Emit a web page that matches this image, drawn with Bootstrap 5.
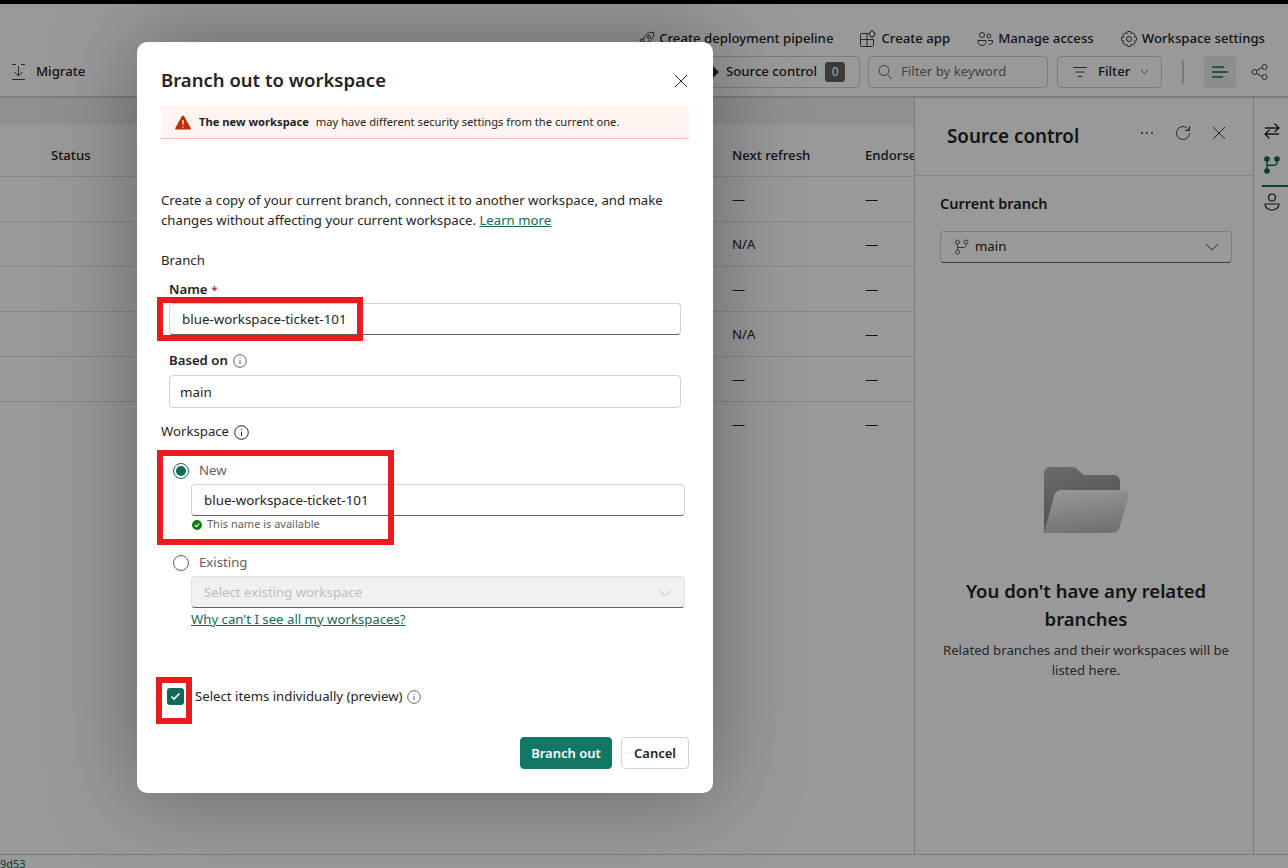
<!DOCTYPE html>
<html lang="en">
<head>
  <meta charset="UTF-8" />
  <meta name="viewport" content="width=device-width, initial-scale=1" />
  <title>Branch out to workspace</title>
  <link href="https://cdn.jsdelivr.net/npm/bootstrap@5.3.2/dist/css/bootstrap.min.css" rel="stylesheet" />
  <style>
    html, body { height: 100%; overflow: hidden; }
    body { font-family: "Noto Sans", "Open Sans", sans-serif; font-size: 13.2px; color: #242424; background: #fff; }
    svg { flex: none; display: block; }
    .app-shell { height: 868px; border-top: 4px solid #000; }
    .top-area { height: 94px; border-bottom: 2px solid #d1d1d1; }
    .action-row { height: 52px; padding: 17px 23px 0 0; gap: 26px; }
    .action-row span, .tool-row { font-weight: 500; }
    .tool-row { height: 32px; }
    .migrate { padding-left: 11px; gap: 10px; }
    .tool-box { height: 32px; border: 1px solid #d1d1d1; border-radius: 4px; }
    .source-box { width: 160px; padding-left: 2px; margin-right: 8px; gap: 8px; }
    .source-box .diamond-mark { margin-right: -1px; }
    .zero-pill { width: 20px; height: 20px; border-radius: 3px; background: #616161; color: #fff; font-size: 12px; }
    .keyword-box { width: 180px; padding-left: 8px; gap: 8px; color: #707070; font-weight: 400; margin-right: 9px; }
    .filter-box { width: 105px; padding-left: 14px; gap: 10px; }
    .tool-sep { width: 2px; height: 24px; background: #d1d1d1; margin: 0 20px; }
    .list-btn { width: 32px; height: 32px; background: #ebebeb; border-radius: 4px; margin-right: 15px; }
    .tool-end { margin-right: 19px; }
    .main-area { width: 915px; border-right: 1px solid #d1d1d1; overflow: hidden; }
    .grey-strip { height: 27px; background: #f0f0f0; }
    .item-table { table-layout: fixed; width: 914px; margin: 0; }
    .item-table th, .item-table td { padding: 3px 12px 0; height: 45px; vertical-align: middle; border-color: #e0e0e0; color: #242424; white-space: nowrap; font-size: 13.2px; }
    .item-table th { height: 51px; padding-top: 11px; font-weight: 500; }
    .item-table tbody tr:last-child td { border-bottom: 0; }
    .cw-a { width: 39px; }
    .cw-c { width: 133px; }
    .cw-d { width: 61px; }
    .side-panel { width: 339px; border-right: 1px solid #d1d1d1; }
    .panel-head { height: 78px; padding: 0 27px 7px 32px; border-bottom: 1px solid #e0e0e0; }
    .panel-title { font-size: 18.8px; font-weight: 600; margin-top: 6px; }
    .head-dots { margin-right: 20px; }
    .head-refresh { margin-right: 20px; }
    .panel-body { padding: 17px 21px 0 25px; }
    .panel-label { font-size: 14.5px; font-weight: 600; margin-bottom: 16px; }
    .branch-select { height: 32px; padding: 0 12px 0 13px; gap: 5px; border: 1px solid #d1d1d1; border-bottom-color: #616161; border-radius: 4px; }
    .empty-block { padding-top: 204px; text-align: center; }
    .empty-title { font-size: 18.5px; font-weight: 600; line-height: 28px; margin: 44px 0 7px; }
    .empty-text { line-height: 20px; color: #424242; }
    .rail { width: 34px; padding-top: 16px; }
    .rail-slot { height: 34px; padding-left: 2px; }
    .rail-on { height: 39px; margin-left: 8px; padding: 0 6px 4px 0; border-bottom: 2px solid #0f6b58; }
    .rail-last { height: 30px; }
    .foot-line { height: 14px; border-top: 1px solid #d1d1d1; font-size: 11px; line-height: 17px; color: #0f6b58; overflow: hidden; }
    .dim-layer { position: absolute; inset: 4px 0 0 0; background: rgba(0,0,0,.4); }
    .branch-dialog { position: absolute; left: 137px; top: 42px; width: 576px; height: 751px; padding: 0 24px; background: #fff; border-radius: 10px; box-shadow: 0 0 90px rgba(0,0,0,.35); }
    .dlg-head { height: 64px; padding-top: 13px; }
    .dlg-title { font-size: 18.5px; font-weight: 600; margin: 0; }
    .dlg-close { margin-right: 1px; }
    .warn-bar { height: 33px; padding-left: 14px; gap: 8px; background: #fff4f0; border-bottom: 1px solid #f4bfab; font-size: 11.2px; }
    .warn-bar b { font-weight: 700; margin-right: 4px; }
    .dlg-intro { margin: 51px 0 20px; line-height: 20px; }
    .dlg-link { color: #0f6b58; }
    .field-wrap { padding-left: 8px; padding-right: 8px; }
    .sub-label { display: flex; align-items: center; gap: 5px; font-weight: 600; height: 20px; margin-bottom: 6px; }
    .name-label { padding-top: 6px; }
    .label-gap { margin-top: 14px; padding-top: 4px; }
    .req-mark { color: #c50f1f; font-size: 11px; margin-left: -1px; }
    .fab-input { height: 32px; padding: 0 12px; border: 1px solid #d1d1d1; border-bottom-color: #616161; border-radius: 4px; display: flex; align-items: center; color: #242424; font-size: 13.35px; }
    .input-plain { border-bottom-color: #d1d1d1; height: 33px; padding: 2px 0 0 10px; }
    .group-label { display: flex; align-items: center; gap: 5px; height: 20px; padding-top: 2px; }
    .branch-head { margin-bottom: 7px; }
    .space-head { margin-top: 13px; }
    .radio-row { display: flex; align-items: center; gap: 10px; height: 24px; margin-top: 18px; padding-left: 12px; color: #616161; }
    .radio-dot { width: 16px; height: 16px; border-radius: 50%; border: 1px solid #616161; }
    .radio-on { border-color: #0f6b58; padding: 2px; }
    .radio-on i { display: block; width: 10px; height: 10px; border-radius: 50%; background: #0f6b58; }
    .indent-block { margin: 1px 0 0 30px; width: 494px; }
    .ok-note { display: flex; align-items: center; gap: 5px; padding-left: 1px; font-size: 11px; color: #616161; height: 17px; }
    .select-off { padding-top: 2px; background: #f0f0f0; color: #bdbdbd; justify-content: space-between; border-color: #e0e0e0; border-bottom-color: #616161; font-size: 13.2px; }
    .why-link { display: block; margin-top: 2px; }
    .check-row { display: flex; align-items: center; height: 20px; margin: 57px 0 0 6px; gap: 11px; }
    .check-box { width: 17px; height: 17px; border-radius: 3px; background: #0f6b58; display: flex; align-items: center; justify-content: center; }
    .dlg-foot { gap: 9px; margin-top: 30px; }
    .btn-teal, .btn-teal:hover { width: 92px; background: #117865; border-color: #117865; color: #fff; }
    .btn-line, .btn-line:hover { width: 68px; background: #fff; border-color: #d1d1d1; color: #242424; }
    .btn-teal, .btn-line { font-weight: 600; font-size: 13px; height: 32px; padding: 2px 0 0; border-radius: 4px; }
    .callout { position: absolute; border: 6px solid #e81c1c; }
    .callout-a { left: 157px; top: 297px; width: 206px; height: 44px; }
    .callout-b { left: 157px; top: 450px; width: 237px; height: 95px; }
    .callout-c { left: 156px; top: 677px; width: 36px; height: 47px; }
  </style>
</head>
<body class="position-relative">

  <div class="app-shell d-flex flex-column">
    <div class="top-area">
      <div class="action-row d-flex justify-content-end">
        <div class="d-flex align-items-center gap-1">
          <svg width="16" height="16" viewBox="0 0 16 16" fill="none" stroke="#424242"><path d="M14.500 1.500c-4-.5-7 1-9 4.500l-1.500 3 3 3 3-1.500c3.500-2 5-5 4.500-9z"/><circle cx="10" cy="6" r="1.500"/><path d="M4 8H2l-1 2 2.500.500M8 12v2l2 1 .500-2.500M3.500 12.500 1.500 14.500"/></svg>
          <span>Create deployment pipeline</span>
        </div>
        <div class="d-flex align-items-center gap-1">
          <svg width="18" height="18" viewBox="0 0 18 18" fill="none" stroke="#424242"><path d="M9 3.500H2.500a1 1 0 0 0-1 1v11a1 1 0 0 0 1 1h11a1 1 0 0 0 1-1V9M1.500 9.500h13M8 3.500v13"/><rect x="10.500" y="1.500" width="5" height="5" rx="1" transform="rotate(45 13 4)"/></svg>
          <span>Create app</span>
        </div>
        <div class="d-flex align-items-center gap-1">
          <svg width="18" height="16" viewBox="0 0 18 16" fill="none" stroke="#424242"><circle cx="6" cy="4" r="2.500"/><circle cx="13" cy="5" r="2"/><path d="M2 9.500h8v1.500c0 2-2 3.500-4 3.500s-4-1.500-4-3.500zM12 9.500h4.500V11c0 1.500-1.500 2.500-3.500 2.500"/></svg>
          <span>Manage access</span>
        </div>
        <div class="d-flex align-items-center gap-1">
          <svg width="18" height="18" viewBox="0 0 18 18" fill="none" stroke="#424242"><circle cx="9" cy="9" r="2.500"/><path d="M7.500 1.500h3l.6 2.200 2-.9 2 2-.9 2.100 2.300.6v3l-2.300.6.900 2.100-2 2-2-.9-.6 2.200h-3l-.6-2.200-2 .9-2-2 .9-2.100-2.300-.6v-3l2.300-.6-.9-2.100 2-2 2 .9z"/></svg>
          <span>Workspace settings</span>
        </div>
      </div>
      <div class="tool-row d-flex align-items-center">
        <div class="migrate d-flex align-items-center me-auto">
          <svg width="15" height="18" viewBox="0 0 15 18" fill="none" stroke="#424242"><path d="M1 1.500h4M10 1.500h4M1 16.500h13M7.500 3v10M3.500 9l4 4 4-4"/></svg>
          <span>Migrate</span>
        </div>
        <div class="tool-box source-box d-flex align-items-center">
          <svg class="diamond-mark" width="16" height="16" viewBox="0 0 16 16" fill="#303030"><path d="M8 0 16 8 8 16 0 8z"/></svg>
          <span>Source control</span>
          <span class="zero-pill d-flex align-items-center justify-content-center">0</span>
        </div>
        <div class="tool-box keyword-box d-flex align-items-center">
          <svg width="16" height="16" viewBox="0 0 16 16" fill="none" stroke="#616161"><circle cx="7" cy="6.500" r="5"/><path d="m10.500 10.500 4 4.500"/></svg>
          <span>Filter by keyword</span>
        </div>
        <div class="tool-box filter-box d-flex align-items-center">
          <svg width="16" height="12" viewBox="0 0 16 12" fill="none" stroke="#424242"><path d="M1 1.500h14M3.500 6h9M6 10.500h4"/></svg>
          <span>Filter</span>
          <svg width="9" height="6" viewBox="0 0 9 6" fill="none" stroke="#616161"><path d="m1 1 3.500 3.500L8 1"/></svg>
        </div>
        <div class="tool-sep"></div>
        <div class="list-btn d-flex align-items-center justify-content-center">
          <svg width="16" height="14" viewBox="0 0 16 14" fill="none" stroke="#0f6b58" stroke-width="1.500"><path d="M0 2h12M0 7h16M0 12h11"/></svg>
        </div>
        <svg class="tool-end" width="18" height="18" viewBox="0 0 18 18" fill="none" stroke="#424242"><circle cx="3.500" cy="9" r="2.500"/><circle cx="13.500" cy="4" r="2.500"/><circle cx="13.500" cy="14" r="2.500"/><path d="M5.500 7.500 11 4.500M5.500 10.500l5.500 3"/></svg>
      </div>
    </div>

    <div class="flex-grow-1 d-flex overflow-hidden">
      <div class="main-area">
        <div class="grey-strip"></div>
        <table class="table item-table">
          <colgroup><col class="cw-a" /><col /><col class="cw-c" /><col class="cw-d" /></colgroup>
          <thead><tr><th></th><th>Status</th><th>Next refresh</th><th>Endorsement</th></tr></thead>
          <tbody>
            <tr><td></td><td></td><td>—</td><td>—</td></tr>
            <tr><td></td><td></td><td>N/A</td><td>—</td></tr>
            <tr><td></td><td></td><td>—</td><td>—</td></tr>
            <tr><td></td><td></td><td>N/A</td><td>—</td></tr>
            <tr><td></td><td></td><td>—</td><td>—</td></tr>
            <tr><td></td><td></td><td>—</td><td>—</td></tr>
          </tbody>
        </table>
      </div>

      <div class="side-panel">
        <div class="panel-head d-flex align-items-center">
          <div class="panel-title me-auto">Source control</div>
          <svg class="head-dots" width="14" height="4" viewBox="0 0 14 4" fill="#424242"><circle cx="2" cy="2" r="1"/><circle cx="7" cy="2" r="1"/><circle cx="12" cy="2" r="1"/></svg>
          <svg class="head-refresh" width="18" height="18" viewBox="0 0 18 18" fill="none" stroke="#424242"><path d="M15.500 9a6.500 6.500 0 1 1-2-4.700L15.500 6.500M15.500 2v4.500H11"/></svg>
          <svg width="14" height="14" viewBox="0 0 14 14" fill="none" stroke="#424242"><path d="m1 1 12 12M13 1 1 13"/></svg>
        </div>
        <div class="panel-body">
          <div class="panel-label">Current branch</div>
          <div class="branch-select d-flex align-items-center">
            <svg width="16" height="16" viewBox="0 0 16 16" fill="none" stroke="#616161"><circle cx="3.500" cy="3" r="2"/><circle cx="12" cy="3" r="2"/><circle cx="3.500" cy="13" r="2"/><path d="M3.500 5v6M12 5v1.500c0 1-1 2-2 2H3.500"/></svg>
            <span class="me-auto">main</span>
            <svg width="14" height="8" viewBox="0 0 14 8" fill="none" stroke="#424242"><path d="m1 1 6 6 6-6"/></svg>
          </div>
          <div class="empty-block">
            <svg class="mx-auto" width="85" height="66" viewBox="0 0 85 66">
              <defs>
                <linearGradient id="folderBack" x1="0" y1="0" x2="0.3" y2="1"><stop offset="0" stop-color="#b4b4b4"/><stop offset="1" stop-color="#828282"/></linearGradient>
                <linearGradient id="folderFront" x1="0.35" y1="0" x2="0.6" y2="1"><stop offset="0" stop-color="#fbfbfb"/><stop offset="1" stop-color="#bcbcbc"/></linearGradient>
              </defs>
              <path d="M0 6a6 6 0 0 1 6-6h22c3 0 4 1 6 3l6 5h30a6 6 0 0 1 6 6v20L0 66z" fill="url(#folderBack)"/>
              <path d="M0 66 10 29c2-5 4-6 9-6h58c6 0 8 3 7 8l-8 28c-1 5-4 7-9 7z" fill="url(#folderFront)"/>
            </svg>
            <div class="empty-title">You don't have any related branches</div>
            <div class="empty-text">Related branches and their workspaces will be listed here.</div>
          </div>
        </div>
      </div>

      <div class="rail">
        <div class="rail-slot d-flex align-items-center justify-content-center">
          <svg width="16" height="18" viewBox="0 0 16 18" fill="none" stroke="#242424" stroke-width="1.300"><path d="M1 6h14M10.500 1.500 15 6l-4.500 4M15 12H1M5.500 8 1 12l4.500 4.500"/></svg>
        </div>
        <div class="rail-slot rail-on d-flex align-items-center justify-content-center">
          <svg width="16" height="18" viewBox="0 0 16 18" fill="#0f6b58"><circle cx="3" cy="3" r="2.800"/><circle cx="13" cy="3" r="2.800"/><circle cx="3" cy="15" r="2.800"/><path d="M2.300 3h1.400v12H2.300zM12.300 3h1.400v3c0 2.500-1.500 4-4 4H3V8.600h6.700c1.700 0 2.600-1 2.600-2.600z"/></svg>
        </div>
        <div class="rail-slot rail-last d-flex align-items-center justify-content-center">
          <svg width="16" height="18" viewBox="0 0 16 18" fill="none" stroke="#242424" stroke-width="1.200"><circle cx="8" cy="4.500" r="3.500"/><path d="M1 11h14c0 3.500-3 6-7 6s-7-2.500-7-6z"/></svg>
        </div>
      </div>
    </div>

    <div class="foot-line">9d53</div>
  </div>

  <div class="dim-layer"></div>

  <div class="branch-dialog">
    <div class="dlg-head d-flex align-items-center justify-content-between">
      <h1 class="dlg-title">Branch out to workspace</h1>
      <svg class="dlg-close" width="14" height="14" viewBox="0 0 14 14" fill="none" stroke="#242424"><path d="m1 1 12 12M13 1 1 13"/></svg>
    </div>
    <div class="warn-bar d-flex align-items-center">
      <svg width="16" height="15" viewBox="0 0 16 15"><path d="M8 .5c.5 0 .8.200 1 .6l6.700 12c.4.700-.1 1.500-.9 1.500H1.200c-.8 0-1.300-.8-.9-1.500l6.700-12c.2-.4.500-.6 1-.6z" fill="#bc2f08"/><path d="M8 5v4.500M8 11.500v1" stroke="#fff" stroke-width="1.300"/></svg>
      <span><b>The new workspace</b> may have different security settings from the current one.</span>
    </div>
    <p class="dlg-intro">Create a copy of your current branch, connect it to another workspace, and make changes without affecting your current workspace. <a class="dlg-link" href="#">Learn more</a></p>
    <div class="group-label branch-head">Branch</div>
    <div class="field-wrap">
      <div class="sub-label name-label">Name <span class="req-mark">*</span></div>
      <div class="fab-input">blue-workspace-ticket-101</div>
      <div class="sub-label label-gap">Based on
        <svg width="14" height="14" viewBox="0 0 14 14" fill="none" stroke="#616161"><circle cx="7" cy="7" r="6.300"/><path d="M7 6v4M7 3.700v1"/></svg>
      </div>
      <div class="fab-input input-plain">main</div>
    </div>
    <div class="group-label space-head">Workspace
      <svg width="15" height="15" viewBox="0 0 15 15" fill="none" stroke="#242424"><circle cx="7.500" cy="7.500" r="6.800"/><path d="M7.500 6.500v4.500M7.500 3.800v1.200"/></svg>
    </div>
    <div class="radio-row"><span class="radio-dot radio-on"><i></i></span>New</div>
    <div class="indent-block">
      <div class="fab-input">blue-workspace-ticket-101</div>
      <div class="ok-note">
        <svg width="10" height="10" viewBox="0 0 10 10"><circle cx="5" cy="5" r="5" fill="#107c10"/><path d="m2.800 5.200 1.600 1.500 2.800-3" fill="none" stroke="#fff" stroke-width="1.100"/></svg>
        This name is available
      </div>
    </div>
    <div class="radio-row"><span class="radio-dot"></span>Existing</div>
    <div class="indent-block">
      <div class="fab-input select-off">Select existing workspace
        <svg width="13" height="7" viewBox="0 0 13 7" fill="none" stroke="#bdbdbd"><path d="m1 .5 5.500 5.500L12 .5"/></svg>
      </div>
      <a class="dlg-link why-link" href="#">Why can't I see all my workspaces?</a>
    </div>
    <div class="check-row">
      <span class="check-box">
        <svg width="11" height="9" viewBox="0 0 11 9" fill="none" stroke="#fff" stroke-width="1.600"><path d="m1.500 4.500 2.500 2.500 5.500-5.500"/></svg>
      </span>
      <span class="d-flex align-items-center gap-1">Select items individually (preview)
        <svg width="14" height="14" viewBox="0 0 14 14" fill="none" stroke="#616161"><circle cx="7" cy="7" r="6.300"/><path d="M7 6v4M7 3.700v1"/></svg>
      </span>
    </div>
    <div class="dlg-foot d-flex justify-content-end">
      <button class="btn btn-teal" type="button">Branch out</button>
      <button class="btn btn-line" type="button">Cancel</button>
    </div>
  </div>

  <div class="callout callout-a"></div>
  <div class="callout callout-b"></div>
  <div class="callout callout-c"></div>

  <script src="https://cdn.jsdelivr.net/npm/bootstrap@5.3.2/dist/js/bootstrap.bundle.min.js"></script>
</body>
</html>
